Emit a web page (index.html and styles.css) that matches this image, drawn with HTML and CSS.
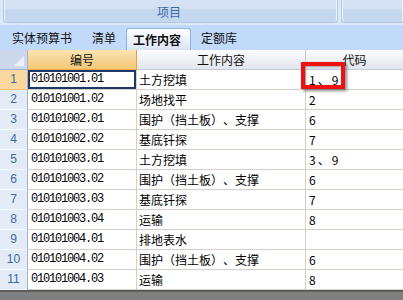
FILE: index.html
```html
<!DOCTYPE html>
<html>
<head>
<meta charset="utf-8">
<link rel="stylesheet" href="styles.css">
</head>
<body>
<div class="app">
  <div class="ribbon">
    <div class="panel main"><span class="panel-label">项目</span></div>
    <div class="panel side"></div>
  </div>
  <div class="tabs">
    <div class="tab">实体预算书</div>
    <div class="tab">清单</div>
    <div class="tab active">工作内容</div>
    <div class="tab">定额库</div>
  </div>
  <div class="grid">
    <div class="hcell corner"><span class="tri"></span></div>
    <div class="hcell sel">编号</div>
    <div class="hcell">工作内容</div>
    <div class="hcell last">代码</div>

    <div class="rn sel">1</div><div class="c code cur">010101001.01</div><div class="c">土方挖填</div><div class="c last">1、9</div>
    <div class="rn">2</div><div class="c code">010101001.02</div><div class="c">场地找平</div><div class="c last">2</div>
    <div class="rn">3</div><div class="c code">010101002.01</div><div class="c">围护（挡土板）、支撑</div><div class="c last">6</div>
    <div class="rn">4</div><div class="c code">010101002.02</div><div class="c">基底钎探</div><div class="c last">7</div>
    <div class="rn">5</div><div class="c code">010101003.01</div><div class="c">土方挖填</div><div class="c last">3、9</div>
    <div class="rn">6</div><div class="c code">010101003.02</div><div class="c">围护（挡土板）、支撑</div><div class="c last">6</div>
    <div class="rn">7</div><div class="c code">010101003.03</div><div class="c">基底钎探</div><div class="c last">7</div>
    <div class="rn">8</div><div class="c code">010101003.04</div><div class="c">运输</div><div class="c last">8</div>
    <div class="rn">9</div><div class="c code">010101004.01</div><div class="c">排地表水</div><div class="c last"></div>
    <div class="rn">10</div><div class="c code">010101004.02</div><div class="c">围护（挡土板）、支撑</div><div class="c last">6</div>
    <div class="rn">11</div><div class="c code">010101004.03</div><div class="c">运输</div><div class="c last">8</div>
  </div>
  <div class="statusbar"></div>
  <div class="mark"></div>
</div>
</body>
</html>
```
FILE: styles.css
```css
* { box-sizing: border-box; }
html, body { margin: 0; padding: 0; }
body {
  width: 403px;
  height: 300px;
  overflow: hidden;
  background: #ffffff;
  font-family: "Noto Sans CJK SC", "Liberation Sans", sans-serif;
  font-size: 12px;
  color: #000;
  text-spacing-trim: space-all;
}
.app { position: relative; width: 403px; height: 300px; overflow: hidden; }

.ribbon {
  height: 25px;
  display: flex;
  gap: 3px;
  padding: 0 0 2px 3px;
  background: #dce8f6;
}
.panel {
  height: 23px;
  border: 1px solid #b2c9e4;
  border-top: none;
  border-radius: 0 0 3px 3px;
  background: linear-gradient(#d4e2f3 0, #d4e2f3 8px, #c5d8ef 10px, #c3d7ef 100%);
  box-shadow: inset 1px 0 0 #eaf2fb, inset -1px 0 0 #eaf2fb;
}
.panel.main {
  width: 335px;
  display: flex;
  align-items: flex-end;
  justify-content: flex-end;
  padding: 0 156px 2px 0;
}
.panel.side { flex: 1; border-right: none; border-radius: 0 0 0 3px; }
.panel-label {
  color: #3e69a6;
  font-size: 12px;
  line-height: 16px;
}

.tabs {
  height: 25px;
  display: flex;
  align-items: flex-end;
  padding-left: 2px;
  background: #c2dafa;
}
.tab {
  height: 25px;
  line-height: 25px;
  padding: 0 10px;
  color: #111;
  font-size: 12px;
  white-space: nowrap;
}
.tab.active {
  height: 22px;
  line-height: 21px;
  padding: 0 9px 0 6px;
  font-weight: bold;
  border: 1px solid #8fb3e2;
  border-bottom: none;
  border-radius: 3px 3px 0 0;
  background: linear-gradient(#ffffff, #e9f0f9 60%, #dae5f3);
}

.grid {
  display: grid;
  grid-template-columns: 28px 109px 169px 97px;
  grid-template-rows: 20px repeat(11, 20px);
}
.hcell {
  height: 20px;
  line-height: 19px;
  text-align: center;
  background: linear-gradient(#fbfcfd, #eef1f5 50%, #e2e7ee);
  border-right: 1px solid #d4d0c8;
  border-bottom: 1px solid #c2ccd8;
  color: #111;
}
.hcell.last { border-right: none; }
.hcell.sel {
  background: linear-gradient(#fbe3b2, #f8d596 50%, #f4c875);
  border-right: 1px solid #f29b3a;
  border-bottom: 1px solid #f0a848;
}
.hcell.corner {
  position: relative;
  background: #cdd9ea;
  border-right: 1px solid #9db4d3;
  border-bottom: 1px solid #9db4d3;
}
.tri {
  position: absolute;
  right: 3px;
  bottom: 3px;
  width: 0;
  height: 0;
  border-left: 10px solid transparent;
  border-bottom: 10px solid #eef2f8;
}

.rn {
  height: 20px;
  line-height: 19px;
  text-align: center;
  color: #3a6aa3;
  background: #e3ebf6;
  border-right: 1px solid #9db4d3;
  border-bottom: 1px solid #f4f7fb;
  font-family: "Liberation Sans", "Noto Sans CJK SC", sans-serif;
  font-size: 12px;
}
.rn.sel { background: #f8d89e; border-bottom-color: #f2c36e; }

.c {
  height: 20px;
  line-height: 19px;
  padding-left: 2px;
  border-right: 1px solid #d4d0c8;
  border-bottom: 1px solid #d4d0c8;
  white-space: nowrap;
  overflow: hidden;
}
.c.last { border-right: none; padding-left: 3px; letter-spacing: 2px; }
.c.code {
  padding-left: 3px;
  font-family: "Liberation Mono", monospace;
  font-size: 12px;
  letter-spacing: -1.2px;
}
.c.cur { box-shadow: inset 0 0 0 2px #1c3868; }

.statusbar {
  height: 10px;
  background: #808080;
  border-top: 2px solid #5c5c5c;
}

.mark {
  position: absolute;
  left: 301px;
  top: 62px;
  width: 44px;
  height: 27px;
  border: 4px solid #ee1111;
  box-shadow: 2px 2px 3px rgba(0,0,0,0.45), inset 1px 1px 2px rgba(0,0,0,0.3);
}
```
